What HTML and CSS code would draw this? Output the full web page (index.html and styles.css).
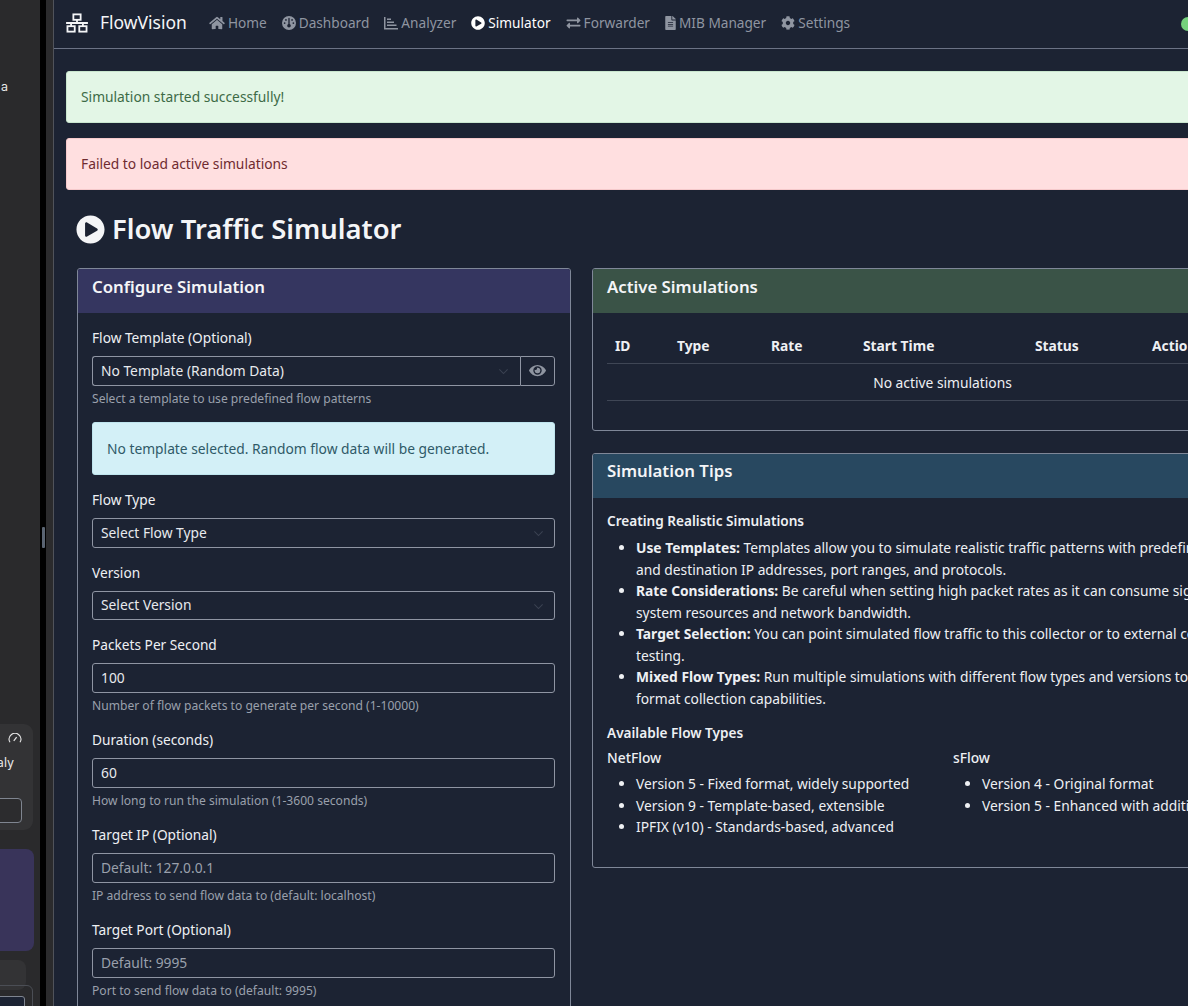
FILE: index.html
```html
<!DOCTYPE html>
<html lang="en">
<head>
<meta charset="utf-8">
<title>FlowVision - Simulator</title>
<link rel="stylesheet" href="styles.css">
</head>
<body>
<div class="app">
  <aside class="sidebar">
    <div class="sb-a">a</div>
    <div class="sb-card">
      <svg class="sb-gauge" viewBox="0 0 16 12" width="14" height="10"><path d="M2 11a7 7 0 1 1 12 0" fill="none" stroke="#e5e5e5" stroke-width="1.3"/><path d="M6.5 9.5 10 5" stroke="#e5e5e5" stroke-width="1.5"/></svg>
      <div class="sb-aly">aly</div>
      <div class="sb-input"></div>
    </div>
    <div class="sb-purple"></div>
    <div class="sb-gray"></div>
    <div class="sb-outline"><div class="sb-dark"></div></div>
  </aside>
  <div class="divider"><span class="handle"></span></div>
  <div class="gutter"></div>
  <div class="page">
    <nav class="nav">
      <a class="brand">
        <svg class="brand-ico" viewBox="0 0 24 22" width="22" height="20"><g fill="none" stroke="#f3f4f6" stroke-width="2"><rect x="8" y="1.5" width="8" height="6"/><rect x="1.5" y="14.5" width="8" height="6"/><rect x="14.5" y="14.5" width="8" height="6"/></g><path d="M0 10h24v2H0zM11 7h2v4h-2zM4.500 11h2v4h-2zM17.500 11h2v4h-2z" fill="#f3f4f6"/></svg>
        FlowVision
      </a>
      <a class="nav-link"><svg class="ico" viewBox="0 0 576 512" width="16" height="14"><path d="M280.37 148.26L96 300.11V464a16 16 0 0 0 16 16l112.06-.29a16 16 0 0 0 15.92-16V368a16 16 0 0 1 16-16h64a16 16 0 0 1 16 16v95.64a16 16 0 0 0 16 16.05L464 480a16 16 0 0 0 16-16V300L295.67 148.26a12.19 12.19 0 0 0-15.3 0zM571.6 251.47L488 182.56V44.05a12 12 0 0 0-12-12h-56a12 12 0 0 0-12 12v72.61L318.47 43a48 48 0 0 0-61 0L4.34 251.47a12 12 0 0 0-1.6 16.9l25.5 31A12 12 0 0 0 45.15 301l235.22-193.74a12.19 12.19 0 0 1 15.3 0L530.9 301a12 12 0 0 0 16.9-1.6l25.5-31a12 12 0 0 0-1.7-16.93z"/></svg>Home</a>
      <a class="nav-link"><svg class="ico" viewBox="0 0 512 512" width="14" height="14"><path d="M0 256a256 256 0 1 1 512 0A256 256 0 1 1 0 256zm320 96c0-26.900-16.500-49.900-40-59.300V88c0-13.300-10.700-24-24-24s-24 10.700-24 24V292.700c-23.500 9.500-40 32.500-40 59.300c0 35.300 28.700 64 64 64s64-28.700 64-64zM144 176a32 32 0 1 0 0-64 32 32 0 1 0 0 64zm-16 80a32 32 0 1 0 -64 0 32 32 0 1 0 64 0zm288 32a32 32 0 1 0 0-64 32 32 0 1 0 0 64zM400 144a32 32 0 1 0 -64 0 32 32 0 1 0 64 0z"/></svg>Dashboard</a>
      <a class="nav-link"><svg class="ico" viewBox="0 0 14 14" width="14" height="14"><path d="M0 1h1.500v11H14v1.500H0zM3 2.500h4v1.500H3zM3 5.500h7v1.500H3zM3 8.500h9.500V10H3z"/></svg>Analyzer</a>
      <a class="nav-link active"><svg class="ico" viewBox="0 0 512 512" width="14" height="14"><path d="M256 8C119 8 8 119 8 256s111 248 248 248 248-111 248-248S393 8 256 8zm115.700 272l-176 101c-15.800 8.800-35.700-2.500-35.700-21V152c0-18.400 19.800-29.800 35.700-21l176 107c16.400 9.200 16.400 32.900 0 42z"/></svg>Simulator</a>
      <a class="nav-link"><svg class="ico" viewBox="0 0 512 512" width="15" height="14"><path d="M0 168v-16c0-13.255 10.745-24 24-24h360V80c0-21.367 25.899-32.042 40.971-16.971l80 80c9.372 9.373 9.372 24.569 0 33.941l-80 80C409.956 271.982 384 261.456 384 240v-48H24c-13.255 0-24-10.745-24-24zm488 152H128v-48c0-21.314-25.862-32.080-40.971-16.971l-80 80c-9.372 9.373-9.372 24.569 0 33.941l80 80C102.057 463.997 128 453.437 128 432v-48h360c13.255 0 24-10.745 24-24v-16c0-13.255-10.745-24-24-24z"/></svg>Forwarder</a>
      <a class="nav-link"><svg class="ico" viewBox="0 0 384 512" width="11" height="14"><path d="M224 136V0H24C10.700 0 0 10.700 0 24v464c0 13.300 10.700 24 24 24h336c13.300 0 24-10.700 24-24V160H248c-13.200 0-24-10.800-24-24zm64 236c0 6.600-5.400 12-12 12H108c-6.600 0-12-5.400-12-12v-8c0-6.600 5.400-12 12-12h168c6.600 0 12 5.400 12 12v8zm0-64c0 6.600-5.400 12-12 12H108c-6.600 0-12-5.400-12-12v-8c0-6.600 5.400-12 12-12h168c6.600 0 12 5.400 12 12v8zm0-72v8c0 6.600-5.400 12-12 12H108c-6.600 0-12-5.400-12-12v-8c0-6.600 5.400-12 12-12h168c6.600 0 12 5.400 12 12zm96-114.100v6.100H256V0h6.100c6.400 0 12.500 2.500 17 7l97.900 98c4.500 4.500 7 10.600 7 16.900z"/></svg>MIB Manager</a>
      <a class="nav-link"><svg class="ico" viewBox="0 0 512 512" width="14" height="14"><path d="M487.400 315.700l-42.600-24.600c4.300-23.200 4.300-47 0-70.200l42.600-24.600c4.900-2.800 7.100-8.600 5.500-14-11.100-35.600-30-67.800-54.700-94.600-3.800-4.100-10-5.100-14.800-2.300L380.800 110c-17.900-15.400-38.500-27.300-60.800-35.100V25.800c0-5.600-3.900-10.500-9.400-11.700-36.700-8.200-74.300-7.800-109.200 0-5.500 1.200-9.400 6.100-9.400 11.700V75c-22.200 7.900-42.800 19.800-60.800 35.100L88.700 85.500c-4.900-2.800-11-1.900-14.800 2.300-24.700 26.700-43.600 58.900-54.700 94.600-1.700 5.400.6 11.200 5.500 14L67.300 221c-4.300 23.200-4.300 47 0 70.200l-42.600 24.600c-4.900 2.800-7.100 8.600-5.500 14 11.100 35.600 30 67.800 54.700 94.600 3.800 4.100 10 5.100 14.800 2.300l42.600-24.600c17.900 15.400 38.500 27.300 60.800 35.100v49.200c0 5.600 3.900 10.500 9.400 11.700 36.700 8.200 74.300 7.800 109.200 0 5.500-1.200 9.400-6.100 9.400-11.700v-49.200c22.200-7.900 42.800-19.800 60.800-35.100l42.600 24.600c4.900 2.800 11 1.900 14.800-2.300 24.700-26.700 43.600-58.900 54.700-94.600 1.500-5.500-.7-11.300-5.600-14.100zM256 336c-44.100 0-80-35.900-80-80s35.900-80 80-80 80 35.900 80 80-35.900 80-80 80z"/></svg>Settings</a>
      <span class="status-dot"></span>
    </nav>
    <main class="content">
      <div class="alert alert-ok">Simulation started successfully!</div>
      <div class="alert alert-err">Failed to load active simulations</div>
      <h1 class="title"><svg class="title-ico" viewBox="0 0 512 512" width="29" height="29"><path d="M256 8C119 8 8 119 8 256s111 248 248 248 248-111 248-248S393 8 256 8zm115.700 272l-176 101c-15.800 8.800-35.700-2.500-35.700-21V152c0-18.400 19.800-29.800 35.700-21l176 107c16.400 9.200 16.400 32.900 0 42z"/></svg>Flow Traffic Simulator</h1>
      <div class="cols">
        <section class="card card-left">
          <h2 class="card-head head-purple">Configure Simulation</h2>
          <form class="card-body form">
            <div class="group">
              <label class="lbl">Flow Template (Optional)</label>
              <div class="input-group">
                <div class="select-wrap grow">
                  <select class="ctl joined"><option>No Template (Random Data)</option></select>
                  <svg class="chev" viewBox="0 0 16 16" width="11" height="11"><path d="M2 5l6 6 6-6" fill="none" stroke="currentColor" stroke-width="1.500"/></svg>
                </div>
                <button type="button" class="eye-btn"><svg viewBox="0 0 576 512" width="17" height="15"><path d="M572.520 241.400C518.290 135.590 410.930 64 288 64S57.680 135.640 3.480 241.410a32.350 32.350 0 0 0 0 29.190C57.710 376.410 165.070 448 288 448s230.320-71.640 284.520-177.410a32.350 32.350 0 0 0 0-29.190zM288 400a144 144 0 1 1 144-144 143.930 143.930 0 0 1-144 144zm0-240a95.310 95.310 0 0 0-25.310 3.790 47.850 47.850 0 0 1-66.900 66.900A95.780 95.780 0 1 0 288 160z"/></svg></button>
              </div>
              <div class="help">Select a template to use predefined flow patterns</div>
            </div>
            <div class="alert alert-info">No template selected. Random flow data will be generated.</div>
            <div class="group group-sel">
              <label class="lbl">Flow Type</label>
              <div class="select-wrap">
                <select class="ctl"><option>Select Flow Type</option></select>
                <svg class="chev" viewBox="0 0 16 16" width="11" height="11"><path d="M2 5l6 6 6-6" fill="none" stroke="currentColor" stroke-width="1.500"/></svg>
              </div>
            </div>
            <div class="group group-sel">
              <label class="lbl">Version</label>
              <div class="select-wrap">
                <select class="ctl"><option>Select Version</option></select>
                <svg class="chev" viewBox="0 0 16 16" width="11" height="11"><path d="M2 5l6 6 6-6" fill="none" stroke="currentColor" stroke-width="1.500"/></svg>
              </div>
            </div>
            <div class="group">
              <label class="lbl">Packets Per Second</label>
              <input class="ctl" value="100">
              <div class="help">Number of flow packets to generate per second (1-10000)</div>
            </div>
            <div class="group">
              <label class="lbl">Duration (seconds)</label>
              <input class="ctl" value="60">
              <div class="help">How long to run the simulation (1-3600 seconds)</div>
            </div>
            <div class="group">
              <label class="lbl">Target IP (Optional)</label>
              <input class="ctl" placeholder="Default: 127.0.0.1">
              <div class="help">IP address to send flow data to (default: localhost)</div>
            </div>
            <div class="group">
              <label class="lbl">Target Port (Optional)</label>
              <input class="ctl" placeholder="Default: 9995">
              <div class="help">Port to send flow data to (default: 9995)</div>
            </div>
          </form>
        </section>
        <div class="right">
          <section class="card">
            <h2 class="card-head head-green">Active Simulations</h2>
            <div class="card-body table-body">
              <table class="tbl">
                <thead><tr><th class="c1">ID</th><th class="c2">Type</th><th class="c3">Rate</th><th class="c4">Start Time</th><th class="c5">Status</th><th>Actions</th></tr></thead>
                <tbody><tr><td colspan="6">No active simulations</td></tr></tbody>
              </table>
            </div>
          </section>
          <section class="card">
            <h2 class="card-head head-blue">Simulation Tips</h2>
            <div class="card-body tips">
              <h3 class="tips-h">Creating Realistic Simulations</h3>
              <ul class="tips-list tips-main">
                <li><b>Use Templates:</b> Templates allow you to simulate realistic traffic patterns with predefined source<br>and destination IP addresses, port ranges, and protocols.</li>
                <li><b>Rate Considerations:</b> Be careful when setting high packet rates as it can consume significant<br>system resources and network bandwidth.</li>
                <li><b>Target Selection:</b> You can point simulated flow traffic to this collector or to external collectors for<br>testing.</li>
                <li><b>Mixed Flow Types:</b> Run multiple simulations with different flow types and versions to test multi-<br>format collection capabilities.</li>
              </ul>
              <h3 class="tips-h tips-avail">Available Flow Types</h3>
              <div class="flow-cols">
                <div>
                  <h4 class="flow-h">NetFlow</h4>
                  <ul class="tips-list">
                    <li>Version 5 - Fixed format, widely supported</li>
                    <li>Version 9 - Template-based, extensible</li>
                    <li>IPFIX (v10) - Standards-based, advanced</li>
                  </ul>
                </div>
                <div>
                  <h4 class="flow-h">sFlow</h4>
                  <ul class="tips-list">
                    <li>Version 4 - Original format</li>
                    <li>Version 5 - Enhanced with additional data</li>
                  </ul>
                </div>
              </div>
            </div>
          </section>
        </div>
      </div>
    </main>
  </div>
</div>
</body>
</html>
```
FILE: styles.css
```css
* { box-sizing: border-box; }
html, body { margin: 0; padding: 0; height: 100%; overflow: hidden; background: #1c2333; }
body { font-family: "Noto Sans", "Liberation Sans", sans-serif; font-size: 13.8px; line-height: 21.5px; color: #eef0f3; }

.app { display: flex; width: 1188px; height: 1006px; overflow: hidden; }

.sidebar { flex: 0 0 40px; background: #2a2a2c; color: #e8e8e8; padding-top: 76px; display: flex; flex-direction: column; overflow: hidden; font-family: Inter, sans-serif; font-size: 12.5px; }
.sb-a { height: 22px; line-height: 22px; padding-left: 1px; }
.sb-card { margin-top: 626px; margin-left: -20px; width: 53px; height: 106px; flex: none; background: #333335; border-radius: 9px; position: relative; padding-top: 28px; text-align: right; padding-right: 19px; }
.sb-gauge { position: absolute; top: 9px; right: 11px; }
.sb-aly { height: 22px; line-height: 22px; }
.sb-input { margin: 24px 0 0 0; width: 42px; height: 25px; border: 1px solid #7f8590; border-radius: 4px; background: #2c2c2e; }
.sb-purple { margin-top: 19px; margin-left: -20px; width: 54px; height: 102px; flex: none; background: #39345a; border-radius: 8px; }
.sb-gray { margin-top: 9px; margin-left: -20px; width: 46px; height: 30px; flex: none; background: #333335; border-radius: 8px; }
.sb-outline { margin-top: -5px; margin-left: -20px; width: 53px; height: 40px; flex: none; border: 1px solid #4b4e55; border-radius: 6px; padding: 10px 7px 0 0; }
.sb-dark { height: 20px; background: #1c2333; border: 1px solid #7f8590; border-radius: 3px; }

.divider { flex: 0 0 6px; background: #000; position: relative; }
.handle { position: absolute; left: 2px; top: 527px; width: 3px; height: 21px; background: #5a6472; border-radius: 1px; }
.gutter { flex: 0 0 8px; background: #2b2b2d; border-right: 1px solid #50535b; }

.page { flex: none; width: 1400px; }

.nav { height: 49px; border-bottom: 1px solid #6b7285; display: flex; align-items: center; padding: 0 0 3px 12px; position: relative; width: 1134px; }
.brand { display: flex; align-items: center; gap: 12px; font-size: 17.5px; color: #f4f5f7; margin-right: 22px; }
.nav-link { display: flex; align-items: center; gap: 3px; color: #8f95a1; margin-right: 15px; font-size: 13.65px; }
.nav-link .ico { fill: currentColor; flex: none; }
.nav-link.active { color: #fff; }
.status-dot { position: absolute; left: 1127px; top: 17px; width: 14px; height: 14px; border-radius: 50%; background: #75d17c; }

.content { padding: 22px 0 0 12px; width: 1250px; }
.alert { height: 52px; padding: 0 14px; display: flex; align-items: center; border-radius: 3px; border: 1px solid transparent; font-size: 13.8px; }
.alert-ok { background: #e3f6e6; color: #3d6b46; border-color: #c9e6ce; }
.alert-err { background: #ffdfe0; color: #6f2b30; margin-top: 15px; border-color: #f5c9cb; }
.alert-info { background: #d3f0f7; color: #2f5a68; margin: 12px 0 14px; height: 53px; border-color: #bfe5ee; }

.title { display: flex; align-items: center; gap: 7px; margin: 23px 0 0 10px; height: 32px; line-height: 32px; font-size: 27.4px; font-weight: 600; color: #f4f5f7; }
.title-ico { fill: #f4f5f7; flex: none; }

.cols { display: flex; gap: 21px; align-items: flex-start; margin: 23px 0 0 11px; }
.card { border: 1px solid #7f8798; border-radius: 3px; overflow: hidden; }
.card-left { flex: 0 0 494px; }
.right { flex: 0 0 701px; display: flex; flex-direction: column; gap: 22px; }
.card-head { margin: 0; height: 44px; padding: 0 14px 9px; display: flex; align-items: center; font-size: 16.8px; font-weight: 600; color: #f4f5f7; }
.head-purple { background: #353660; }
.head-green { background: #3a5347; }
.head-blue { background: #284860; }

.form { padding: 14px 15px 0 14px; }
.group { margin-bottom: 12px; }
.group-sel { margin-bottom: 14px; }
.lbl { display: block; height: 21.5px; margin-bottom: 7.5px; font-size: 13.7px; color: #eef0f3; }
.ctl { display: block; width: 100%; height: 29.5px; padding: 0 8px 1px; background: #1c2333; border: 1px solid #8f95a3; border-radius: 3px; color: #e8eaee; font: inherit; font-size: 13.8px; appearance: none; outline: none; }
.ctl::placeholder { color: #9aa0ac; opacity: 1; }
.help { margin-top: 2.5px; height: 22px; line-height: 22px; font-size: 12.1px; color: #9aa0ac; }
.select-wrap { position: relative; }
.grow { flex: 1; }
.chev { position: absolute; right: 11px; top: 10px; color: #3b4252; }
.input-group { display: flex; }
.joined { border-right: 0; border-radius: 3px 0 0 3px; }
.eye-btn { flex: 0 0 35px; height: 29.5px; padding: 0; display: flex; align-items: center; justify-content: center; background: transparent; border: 1px solid #8f95a3; border-radius: 0 3px 3px 0; }
.eye-btn svg { fill: #8f95a1; }

.table-body { padding: 15px 14px 29px; }
.tbl { width: 100%; border-collapse: collapse; font-size: 13.8px; }
.tbl th { height: 35px; text-align: left; padding: 0 8px; font-weight: 700; border-bottom: 1px solid #3f4655; color: #eef0f3; }
.tbl td { height: 37px; padding-top: 3px; text-align: center; border-bottom: 1px solid #3f4655; }
.c1 { width: 62px; }
.c2 { width: 94px; }
.c3 { width: 92px; }
.c4 { width: 172px; }
.c5 { width: 117px; }

.tips { padding: 12px 14px 29px; font-size: 13.8px; }
.tips-h { margin: 0; height: 21.5px; font-size: 13.6px; font-weight: 600; }
.tips-list { margin: 5px 0 0; padding-left: 29px; white-space: nowrap; }
.tips-main { margin-top: 6px; }
.tips-avail { margin-top: 13px; }
.flow-cols { display: grid; grid-template-columns: 346px 1fr; margin-top: 3px; }
.flow-h { margin: 0; height: 21.5px; font-size: 13.8px; font-weight: 500; }
```
